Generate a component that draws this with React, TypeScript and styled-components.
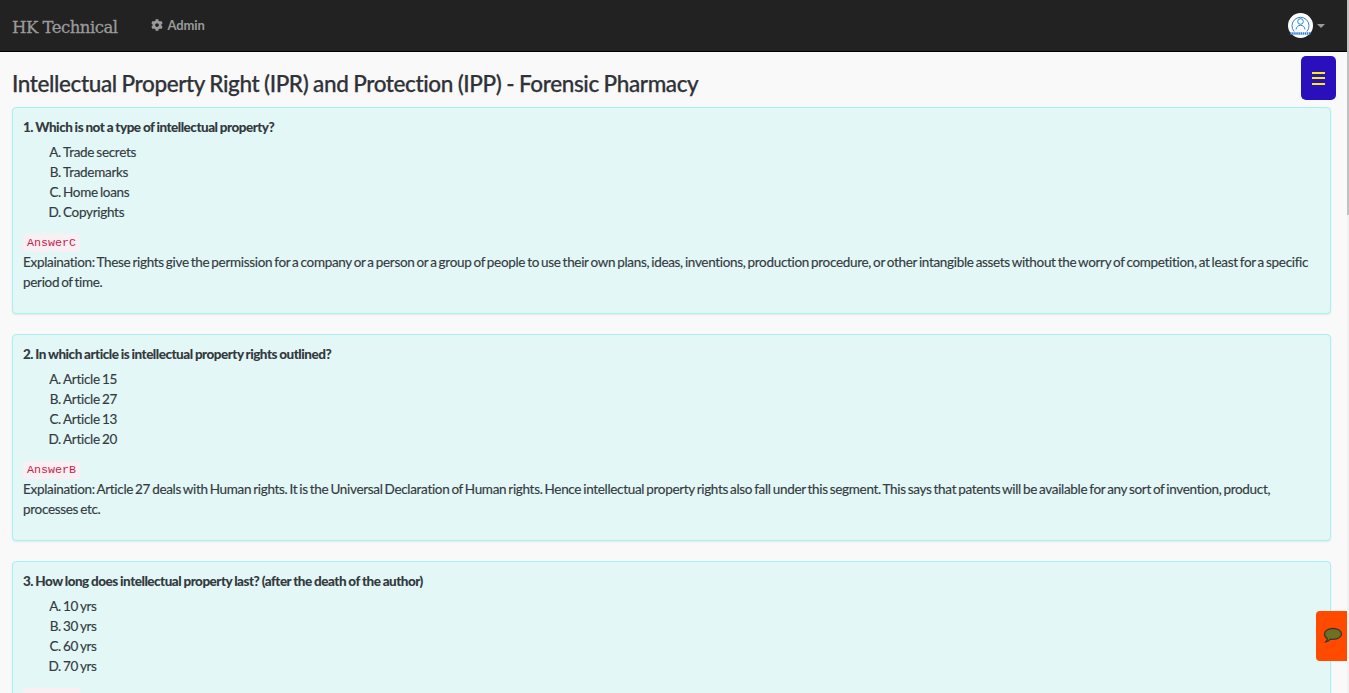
import React from "react";
import styled, { createGlobalStyle } from "styled-components";
import { FaCog } from "react-icons/fa";

const GlobalStyle = createGlobalStyle`
  html, body {
    margin: 0;
    height: 693px;
    overflow: hidden;
    background: #f8f9fa;
  }
  body {
    font-family: "Lato", "Liberation Sans", sans-serif;
    color: #343a40;
  }
`
const Page = styled.div`
  width: 1349px;
  height: 693px;
  overflow: hidden;
  position: relative;
  background: #f9f9f9;
`
const Scrollbar = styled.div`
  position: absolute;
  top: 0;
  right: 0;
  width: 2px;
  height: 693px;
  background: #f1f1f1;

  &::after {
    content: '';
    position: absolute;
    top: 0;
    left: 0;
    width: 2px;
    height: 215px;
    background: #c1c1c1;
  }
`
const Navbar = styled.nav`
  display: flex;
  align-items: center;
  width: 1347px;
  height: 52px;
  box-sizing: border-box;
  padding: 0 12px;
  background: #222222;
  border-bottom: 1px solid #000;
`
const Brand = styled.div`
  font-family: "DejaVu Serif", serif;
  font-size: 16.5px;
  letter-spacing: -0.5px;
  -webkit-text-stroke: 0.3px #9a9a9a;
  color: #9a9a9a;
  margin-top: 4px;
  margin-right: 33px;
`
const NavItem = styled.div`
  display: flex;
  align-items: center;
  gap: 5px;
  margin-top: -1px;
  font-size: 13px;
  font-weight: 700;
  letter-spacing: -0.15px;
  color: #9a9a9a;
`
const Profile = styled.div`
  display: flex;
  align-items: center;
  gap: 4px;
  margin-left: auto;
  margin-right: 10px;
`
const AvatarCircle = styled.div`
  display: flex;
  align-items: center;
  justify-content: center;
  width: 25px;
  height: 25px;
  border-radius: 50%;
  background: #fff;
`
const Caret = styled.span`
  width: 0;
  height: 0;
  border-top: 4px solid #999;
  border-left: 4px solid transparent;
  border-right: 4px solid transparent;
`
const Content = styled.main`
  width: 1347px;
  box-sizing: border-box;
  padding: 0 16px 0 12px;
`
const Title = styled.h1`
  margin: 0;
  padding-top: 17px;
  height: 55px;
  box-sizing: border-box;
  font-size: 22.5px;
  line-height: 30px;
  font-weight: 500;
  letter-spacing: -0.39px;
  word-spacing: -0.5px;
  -webkit-text-stroke: 0.25px #2f3338;
  color: #2f3338;
`
const Card = styled.section`
  box-sizing: border-box;
  height: 207px;
  margin-bottom: 20px;
  padding: 9px 10px 0;
  border: 1px solid #a9f0f5;
  border-radius: 4px;
  background: #e2f7f6;
  box-shadow: 0 1px 2px rgba(0, 0, 0, 0.08);
`
const Question = styled.div`
  font-size: 13.5px;
  line-height: 20px;
  font-weight: 900;
  letter-spacing: -0.5px;
  word-spacing: -0.4px;
  color: #343a40;
`
const Options = styled.ol`
  list-style: none;
  margin: 5px 0 0;
  padding: 0 0 0 25px;
`
const Option = styled.li`
  display: flex;
  font-size: 13.5px;
  line-height: 20px;
  letter-spacing: -0.3px;
  word-spacing: -1px;
  -webkit-text-stroke: 0.15px #343a40;
  color: #343a40;
`
const OptionLetter = styled.span`
  width: 13px;
  text-align: right;
  margin-right: 2px;
`
const Answer = styled.code`
  display: inline-block;
  margin-top: 12px;
  padding: 0 4px;
  height: 18px;
  line-height: 18px;
  border-radius: 3px;
  background: #f9f0f4;
  color: #c7254e;
  font-family: "Liberation Mono", monospace;
  font-size: 11.7px;
`
const Explanation = styled.p`
  margin: 0;
  font-size: 13.5px;
  line-height: 20px;
  letter-spacing: -0.32px;
  word-spacing: -1.1px;
  -webkit-text-stroke: 0.15px #343a40;
  color: #343a40;
`
const MenuButton = styled.button`
  position: absolute;
  top: 56px;
  right: 13px;
  display: flex;
  flex-direction: column;
  align-items: center;
  justify-content: center;
  gap: 3.5px;
  width: 35px;
  height: 44px;
  padding: 0;
  border: none;
  border-radius: 5px;
  background: #2a0fbd;
`
const MenuLine = styled.span`
  width: 13px;
  height: 2px;
  background: #f5ee10;
`
const ChatTab = styled.div`
  position: absolute;
  top: 611px;
  right: 0;
  display: flex;
  align-items: center;
  justify-content: center;
  width: 33px;
  height: 50px;
  border-radius: 4px 0 0 4px;
  background: #ff4a00;
`

const questions = [
  {
    text: "1. Which is not a type of intellectual property?",
    options: ["Trade secrets", "Trademarks", "Home loans", "Copyrights"],
    answer: "AnswerC",
    explanation:
      "Explaination: These rights give the permission for a company or a person or a group of people to use their own plans, ideas, inventions, production procedure, or other intangible assets without the worry of competition, at least for a specific period of time."
  },
  {
    text: "2. In which article is intellectual property rights outlined?",
    options: ["Article 15", "Article 27", "Article 13", "Article 20"],
    answer: "AnswerB",
    explanation:
      "Explaination: Article 27 deals with Human rights. It is the Universal Declaration of Human rights. Hence intellectual property rights also fall under this segment. This says that patents will be available for any sort of invention, product, processes etc."
  },
  {
    text: "3. How long does intellectual property last? (after the death of the author)",
    options: ["10 yrs", "30 yrs", "60 yrs", "70 yrs"],
    answer: "AnswerD",
    explanation: ""
  }
];

const letters = ["A.", "B.", "C.", "D."];

const App = () => {
  return (
    <Page>
      <GlobalStyle />
      <Navbar>
        <Brand>HK Technical</Brand>
        <NavItem>
          <FaCog size={12} />
          Admin
        </NavItem>
        <Profile>
          <AvatarCircle>
            <svg width="25" height="25" viewBox="0 0 25 25" fill="none" stroke="#2f80d8" strokeWidth="1">
              <path d="M6.200 18.500a8.500 8.500 0 1 1 12.600 0" />
              <circle cx="12.500" cy="8.500" r="2.800" />
              <path d="M8 16.500c.4-2.800 2.200-4.200 4.500-4.200s4.100 1.400 4.500 4.200" />
              <path d="M2 20.500h21" strokeWidth="2.500" strokeDasharray="1.500 .6" />
            </svg>
          </AvatarCircle>
          <Caret />
        </Profile>
      </Navbar>
      <Content>
        <Title>Intellectual Property Right (IPR) and Protection (IPP) - Forensic Pharmacy</Title>
        {questions.map((q) => (
          <Card key={q.text}>
            <Question>{q.text}</Question>
            <Options>
              {q.options.map((option, i) => (
                <Option key={option}>
                  <OptionLetter>{letters[i]}</OptionLetter>
                  {option}
                </Option>
              ))}
            </Options>
            <Answer>{q.answer}</Answer>
            <Explanation>{q.explanation}</Explanation>
          </Card>
        ))}
      </Content>
      <MenuButton aria-label="menu">
        <MenuLine />
        <MenuLine />
        <MenuLine />
      </MenuButton>
      <ChatTab>
        <svg width="20" height="18" viewBox="0 0 20 18">
          <path
            d="M10 1.500c4.800 0 8.500 2.300 8.500 5.400s-3.700 5.400-8.500 5.400c-.9 0-1.800-.1-2.600-.2-1 1.300-2.600 2.400-4.500 2.700.8-.9 1.300-2 1.400-3.300C2.500 10.500 1.500 8.800 1.500 6.900c0-3.100 3.700-5.400 8.500-5.400z"
            fill="#6f6f26"
            stroke="#3a3a2a"
            strokeWidth="1.300"
          />
        </svg>
      </ChatTab>
      <Scrollbar />
    </Page>
  );
};

export default App;
